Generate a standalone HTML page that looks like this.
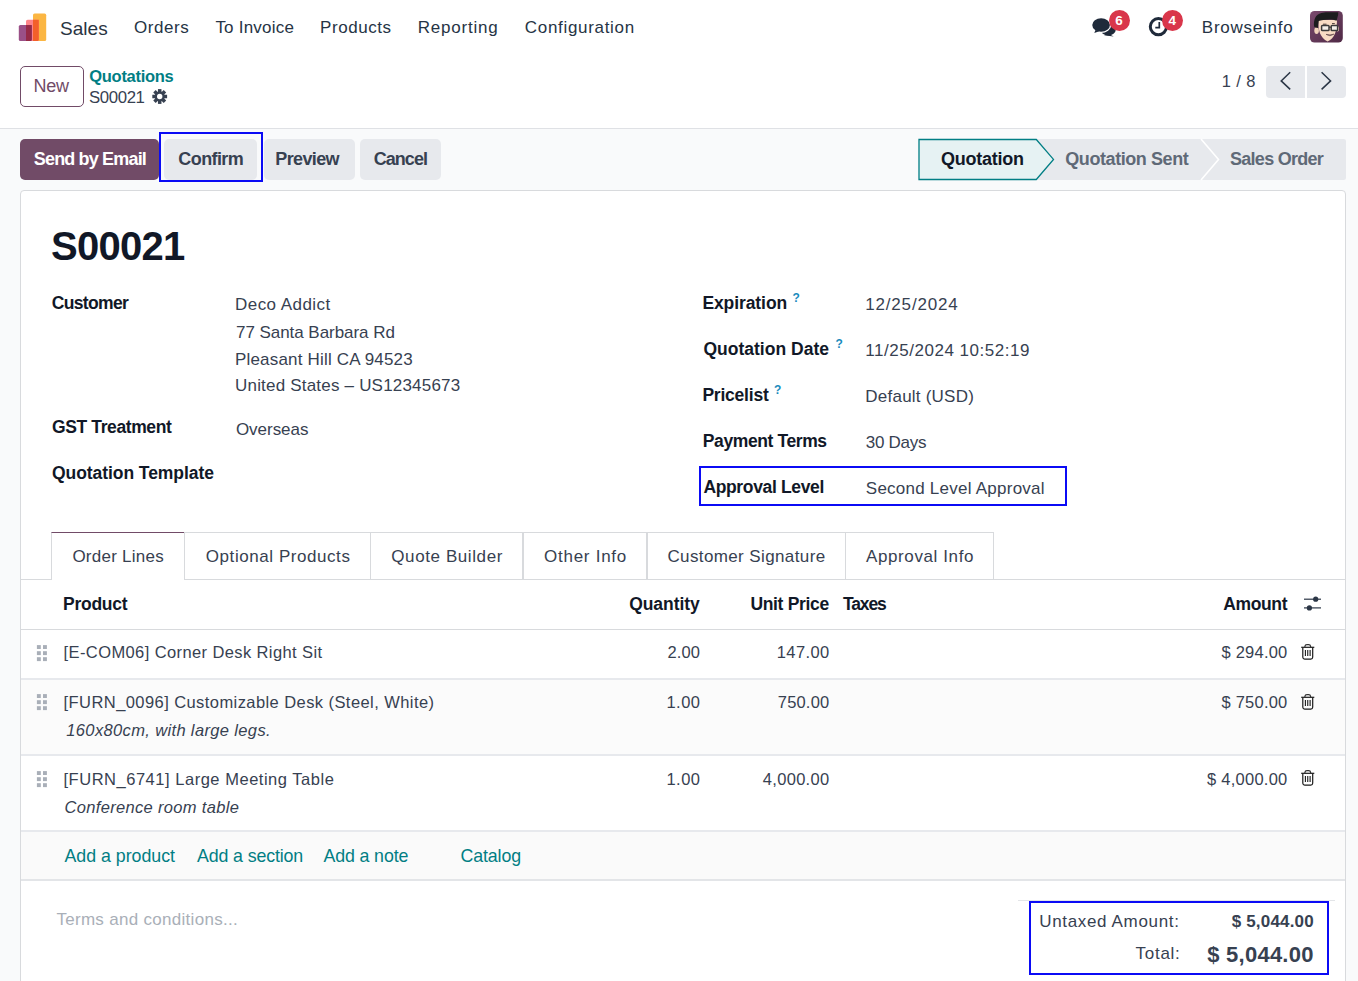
<!DOCTYPE html>
<html><head><meta charset="utf-8"><title>S00021</title>
<style>
html,body{margin:0;padding:0;}
body{width:1358px;height:981px;overflow:hidden;position:relative;background:#fff;font-family:"Liberation Sans",sans-serif;}
.t{position:absolute;white-space:nowrap;line-height:1;}
.a{position:absolute;box-sizing:border-box;}
</style></head><body>
<!-- gray content bg -->
<div class="a" style="left:0;top:128px;width:1358px;height:853px;background:#f9fafb;border-top:1px solid #dfe1e5"></div>
<!-- logo -->
<svg class="a" style="left:0;top:0" width="60" height="46" viewBox="0 0 60 46">
  <rect x="33" y="13.6" width="13.2" height="27.4" rx="1.6" fill="#fbb643"/>
  <rect x="26" y="19.7" width="12.8" height="21.3" rx="1.6" fill="#fd8489"/>
  <rect x="18.8" y="25" width="13" height="16" rx="1.6" fill="#9a5087"/>
  <path d="M26 25 H31.8 V39.4 A1.6 1.6 0 0 1 30.2 41 H26 Z" fill="#962a47"/>
  <path d="M33 19.7 H38.8 V39.4 A1.6 1.6 0 0 1 37.2 41 H33 Z" fill="#f3602a"/>
</svg>
<!-- chat icon -->
<svg class="a" style="left:1085px;top:10px" width="34" height="30" viewBox="0 0 34 30">
  <ellipse cx="23.2" cy="19.6" rx="7.6" ry="6" fill="#1f2a3a"/>
  <path d="M24 24 L28.7 26.6 L19 25.2 Z" fill="#1f2a3a"/>
  <ellipse cx="16.1" cy="15" rx="8.85" ry="6.65" fill="#fff" stroke="#fff" stroke-width="2.6"/>
  <path d="M10.2 19.5 L9.3 23.1 L14.5 21.2 Z" fill="#fff" stroke="#fff" stroke-width="2"/>
  <ellipse cx="16.1" cy="15" rx="8.85" ry="6.65" fill="#1f2a3a"/>
  <path d="M10.6 19.8 L9.3 23.1 L14.2 21.2 Z" fill="#1f2a3a"/>
</svg>
<!-- badge 6 -->
<div class="a" style="left:1109px;top:9.6px;width:21px;height:21px;border-radius:50%;background:#d9364a"></div>
<!-- clock icon -->
<svg class="a" style="left:1145px;top:12px" width="28" height="28" viewBox="0 0 28 28">
  <circle cx="13.4" cy="14.7" r="8.1" fill="none" stroke="#1f2a3a" stroke-width="3"/>
  <path d="M14.3 10 V15.6 H10.3" fill="none" stroke="#1f2a3a" stroke-width="1.7"/>
</svg>
<!-- badge 4 -->
<div class="a" style="left:1162.3px;top:9.6px;width:21px;height:21px;border-radius:50%;background:#d9364a"></div>
<!-- avatar -->
<svg class="a" style="left:1310px;top:11px" width="33" height="32" viewBox="0 0 33 32">
  <defs><linearGradient id="ag" x1="0" y1="0" x2="1" y2="1"><stop offset="0" stop-color="#7a4a6e"/><stop offset="1" stop-color="#4f2945"/></linearGradient></defs>
  <rect x="0" y="0" width="32.8" height="31.6" rx="4.5" fill="url(#ag)"/>
  <ellipse cx="6.6" cy="19.6" rx="2.3" ry="3.4" fill="#f2d3bb"/>
  <ellipse cx="27.6" cy="17.8" rx="1.4" ry="2.8" fill="#f2d3bb"/>
  <path d="M8.4 9 C8.2 20 10 26.5 17.6 30.6 C25 27 26.8 20 27 9 Z" fill="#f8dcc4"/>
  <path d="M4.1 15.5 C3.3 9 5.5 3 11.4 1.9 C17 0.8 24 1.5 28.1 1.2 C28.5 3 28 4.5 27.7 5.4 C27.3 7 27 8.5 26.6 9.7 C24 8.8 21 8.3 19.2 8.5 C15 8.8 11 9.3 8.7 10.1 C8.3 12.5 8.1 15 7.9 17.1 C6.5 16.8 5 16.5 4.1 15.5 Z" fill="#1c1c1e"/>
  <path d="M13 13.2 H16.5 M22 12.6 H24.8" stroke="#3a2a28" stroke-width="0.9"/>
  <rect x="11.6" y="14.4" width="7.4" height="5.2" rx="0.8" fill="#f4efe9" stroke="#3b3b3b" stroke-width="1.5"/>
  <rect x="21.2" y="14.4" width="6.4" height="5.2" rx="0.8" fill="#f4efe9" stroke="#3b3b3b" stroke-width="1.5"/>
  <path d="M19 16.2 H21.2" stroke="#3b3b3b" stroke-width="1.2"/>
  <path d="M16.1 23.4 Q20 26.2 23.8 23.2 Q20 24.6 16.1 23.4 Z" fill="#d9d4d4" stroke="#6b4f4f" stroke-width="0.8"/>
</svg>
<!-- New button -->
<div class="a" style="left:20px;top:66px;width:64px;height:41px;border:1px solid #714b67;border-radius:5px;background:#fff"></div>
<!-- gear -->
<svg class="a" style="left:152px;top:89px" width="16" height="16" viewBox="0 0 16 16">
  <g transform="translate(7.7 7.5)" fill="#374151">
    <circle r="5"/>
    <rect x="-1.75" y="-7.4" width="3.5" height="14.8"/>
    <rect x="-1.75" y="-7.4" width="3.5" height="14.8" transform="rotate(45)"/>
    <rect x="-1.75" y="-7.4" width="3.5" height="14.8" transform="rotate(90)"/>
    <rect x="-1.75" y="-7.4" width="3.5" height="14.8" transform="rotate(135)"/>
  </g>
  <circle cx="7.7" cy="7.5" r="2.7" fill="#fff"/>
</svg>
<!-- pager -->
<div class="a" style="left:1266px;top:66px;width:39px;height:32px;background:#e7e9ed;border-radius:4px 0 0 4px"></div>
<div class="a" style="left:1307px;top:66px;width:39px;height:32px;background:#e7e9ed;border-radius:0 4px 4px 0"></div>
<svg class="a" style="left:1266px;top:66px" width="80" height="32" viewBox="0 0 80 32">
  <path d="M24.2 6.3 L15.2 14.9 L24.2 23.4" fill="none" stroke="#2b3646" stroke-width="1.5"/>
  <path d="M55.6 6.3 L64.6 14.9 L55.6 23.4" fill="none" stroke="#2b3646" stroke-width="1.5"/>
</svg>
<!-- statusbar buttons -->
<div class="a" style="left:20px;top:139px;width:139px;height:41px;background:#714b67;border-radius:5px"></div>
<div class="a" style="left:164px;top:139px;width:93px;height:41px;background:#e7e9ed;border-radius:5px"></div>
<div class="a" style="left:264px;top:139px;width:91px;height:41px;background:#e7e9ed;border-radius:5px"></div>
<div class="a" style="left:360px;top:139px;width:81px;height:41px;background:#e7e9ed;border-radius:5px"></div>
<div class="a" style="left:159px;top:132px;width:104px;height:50px;border:2px solid #0b0bf5"></div>
<!-- status steps -->
<svg class="a" style="left:900px;top:130px" width="458" height="60" viewBox="0 0 458 60">
  <path d="M137 9 H443.5 A2.5 2.5 0 0 1 446 11.5 V47.5 A2.5 2.5 0 0 1 443.5 50 H137 Z" fill="#e7e9ed"/>
  <path d="M301 9 L318.5 29.5 L301 50" fill="none" stroke="#ffffff" stroke-width="1.6"/>
  <path d="M19 9.5 H136.3 L153.5 29.4 L136.3 49.5 H19 Z" fill="#e6f2f3" stroke="#017e84" stroke-width="1.3" stroke-linejoin="miter"/>
</svg>
<!-- sheet -->
<div class="a" style="left:20px;top:190px;width:1326px;height:820px;background:#fff;border:1px solid #d8dadd;border-radius:4px"></div>
<!-- approval blue box -->
<div class="a" style="left:699px;top:466px;width:368px;height:40px;border:2px solid #0b0bf5"></div>
<!-- tabs -->
<div class="a" style="left:21px;top:579px;width:1324px;height:1px;background:#d8dadd"></div>
<div class="a" style="left:51px;top:532px;width:134px;height:48px;background:#fff;border:1px solid #d8dadd;border-top:1px solid #714b67;border-bottom:none"></div>
<div class="a" style="left:184px;top:532px;width:810px;height:48px;border-top:1px solid #d8dadd"></div>
<div class="a" style="left:370px;top:532px;width:1px;height:47px;background:#d8dadd"></div>
<div class="a" style="left:522px;top:532px;width:2px;height:47px;background:#d8dadd"></div>
<div class="a" style="left:646px;top:532px;width:1.5px;height:47px;background:#d8dadd"></div>
<div class="a" style="left:845px;top:532px;width:1px;height:47px;background:#d8dadd"></div>
<div class="a" style="left:993px;top:532px;width:1px;height:47px;background:#d8dadd"></div>
<!-- table -->
<div class="a" style="left:21px;top:629px;width:1324px;height:1px;background:#d8dadd"></div>
<div class="a" style="left:21px;top:678px;width:1324px;height:2px;background:#e7e9ed"></div>
<div class="a" style="left:21px;top:680px;width:1324px;height:74px;background:#fbfbfb"></div>
<div class="a" style="left:21px;top:754px;width:1324px;height:2px;background:#e7e9ed"></div>
<div class="a" style="left:21px;top:830px;width:1324px;height:2px;background:#e7e9ed"></div>
<div class="a" style="left:21px;top:832px;width:1324px;height:47px;background:#fafafa"></div>
<div class="a" style="left:21px;top:879px;width:1324px;height:1.5px;background:#e3e5e8"></div>
<!-- sliders icon -->
<svg class="a" style="left:1300px;top:592px" width="24" height="22" viewBox="0 0 24 22">
  <path d="M4 7.2 H21" stroke="#2b3646" stroke-width="1.2"/>
  <path d="M4 15.9 H21" stroke="#2b3646" stroke-width="1.2"/>
  <circle cx="15.7" cy="7.2" r="2.6" fill="#2b3646"/>
  <circle cx="9.4" cy="15.9" r="2.6" fill="#2b3646"/>
</svg>
<!-- footer totals -->
<div class="a" style="left:1018px;top:900px;width:317px;height:1px;background:#e3e5e8"></div>
<div class="a" style="left:1029px;top:901px;width:300px;height:74px;border:2px solid #0b0bf5"></div>
<svg class="a" style="left:36px;top:645.0px" width="12" height="17" viewBox="0 0 12 17"><rect x="0.9" y="0.1" width="3.9" height="3.9" fill="#a9afb8"/><rect x="0.9" y="6.2" width="3.9" height="3.9" fill="#a9afb8"/><rect x="0.9" y="12.2" width="3.9" height="3.9" fill="#a9afb8"/><rect x="7.0" y="0.1" width="3.9" height="3.9" fill="#a9afb8"/><rect x="7.0" y="6.2" width="3.9" height="3.9" fill="#a9afb8"/><rect x="7.0" y="12.2" width="3.9" height="3.9" fill="#a9afb8"/></svg>
<svg class="a" style="left:1299px;top:644.2px" width="18" height="17" viewBox="0 0 18 17">
<path d="M2.2 3.3 H15.3" stroke="#1a1a1a" stroke-width="1.2"/>
<path d="M5.9 3.3 V2.4 Q6.1 0.6 8 0.6 H9.6 Q11.4 0.6 11.6 2.4 V3.3" fill="none" stroke="#333" stroke-width="1.2"/>
<path d="M3.8 3.5 V13.3 Q3.9 15.1 5.7 15.1 H11.8 Q13.6 15.1 13.7 13.3 V3.5" fill="none" stroke="#1a1a1a" stroke-width="1.2"/>
<path d="M6.4 5.9 V12 M8.75 5.9 V12 M11.1 5.9 V12" stroke="#1a1a1a" stroke-width="1.1"/>
</svg>
<svg class="a" style="left:36px;top:694.3px" width="12" height="17" viewBox="0 0 12 17"><rect x="0.9" y="0.1" width="3.9" height="3.9" fill="#a9afb8"/><rect x="0.9" y="6.2" width="3.9" height="3.9" fill="#a9afb8"/><rect x="0.9" y="12.2" width="3.9" height="3.9" fill="#a9afb8"/><rect x="7.0" y="0.1" width="3.9" height="3.9" fill="#a9afb8"/><rect x="7.0" y="6.2" width="3.9" height="3.9" fill="#a9afb8"/><rect x="7.0" y="12.2" width="3.9" height="3.9" fill="#a9afb8"/></svg>
<svg class="a" style="left:1299px;top:693.5px" width="18" height="17" viewBox="0 0 18 17">
<path d="M2.2 3.3 H15.3" stroke="#1a1a1a" stroke-width="1.2"/>
<path d="M5.9 3.3 V2.4 Q6.1 0.6 8 0.6 H9.6 Q11.4 0.6 11.6 2.4 V3.3" fill="none" stroke="#333" stroke-width="1.2"/>
<path d="M3.8 3.5 V13.3 Q3.9 15.1 5.7 15.1 H11.8 Q13.6 15.1 13.7 13.3 V3.5" fill="none" stroke="#1a1a1a" stroke-width="1.2"/>
<path d="M6.4 5.9 V12 M8.75 5.9 V12 M11.1 5.9 V12" stroke="#1a1a1a" stroke-width="1.1"/>
</svg>
<svg class="a" style="left:36px;top:771.2px" width="12" height="17" viewBox="0 0 12 17"><rect x="0.9" y="0.1" width="3.9" height="3.9" fill="#a9afb8"/><rect x="0.9" y="6.2" width="3.9" height="3.9" fill="#a9afb8"/><rect x="0.9" y="12.2" width="3.9" height="3.9" fill="#a9afb8"/><rect x="7.0" y="0.1" width="3.9" height="3.9" fill="#a9afb8"/><rect x="7.0" y="6.2" width="3.9" height="3.9" fill="#a9afb8"/><rect x="7.0" y="12.2" width="3.9" height="3.9" fill="#a9afb8"/></svg>
<svg class="a" style="left:1299px;top:770.4px" width="18" height="17" viewBox="0 0 18 17">
<path d="M2.2 3.3 H15.3" stroke="#1a1a1a" stroke-width="1.2"/>
<path d="M5.9 3.3 V2.4 Q6.1 0.6 8 0.6 H9.6 Q11.4 0.6 11.6 2.4 V3.3" fill="none" stroke="#333" stroke-width="1.2"/>
<path d="M3.8 3.5 V13.3 Q3.9 15.1 5.7 15.1 H11.8 Q13.6 15.1 13.7 13.3 V3.5" fill="none" stroke="#1a1a1a" stroke-width="1.2"/>
<path d="M6.4 5.9 V12 M8.75 5.9 V12 M11.1 5.9 V12" stroke="#1a1a1a" stroke-width="1.1"/>
</svg>

<span class="t" style="left:59.90px;top:19.00px;font-size:19px;font-weight:400;font-style:normal;color:#2a3442;letter-spacing:0.068px">Sales</span>
<span class="t" style="left:134.10px;top:19.00px;font-size:17px;font-weight:400;font-style:normal;color:#263445;letter-spacing:0.529px">Orders</span>
<span class="t" style="left:215.40px;top:19.00px;font-size:17px;font-weight:400;font-style:normal;color:#263445;letter-spacing:0.213px">To Invoice</span>
<span class="t" style="left:320.00px;top:19.00px;font-size:17px;font-weight:400;font-style:normal;color:#263445;letter-spacing:0.573px">Products</span>
<span class="t" style="left:417.80px;top:19.00px;font-size:17px;font-weight:400;font-style:normal;color:#263445;letter-spacing:0.768px">Reporting</span>
<span class="t" style="left:524.80px;top:19.00px;font-size:17px;font-weight:400;font-style:normal;color:#263445;letter-spacing:0.686px">Configuration</span>
<span class="t" style="left:1115.20px;top:14.00px;font-size:13.5px;font-weight:700;font-style:normal;color:#ffffff;letter-spacing:0.000px">6</span>
<span class="t" style="left:1168.60px;top:14.00px;font-size:13.5px;font-weight:700;font-style:normal;color:#ffffff;letter-spacing:0.000px">4</span>
<span class="t" style="left:1201.80px;top:19.00px;font-size:17px;font-weight:400;font-style:normal;color:#263445;letter-spacing:0.751px">Browseinfo</span>
<span class="t" style="left:33.60px;top:77.00px;font-size:18px;font-weight:400;font-style:normal;color:#714b67;letter-spacing:-0.305px">New</span>
<span class="t" style="left:89.30px;top:68.00px;font-size:16.5px;font-weight:700;font-style:normal;color:#017e84;letter-spacing:-0.300px">Quotations</span>
<span class="t" style="left:89.00px;top:90.00px;font-size:16.8px;font-weight:400;font-style:normal;color:#374151;letter-spacing:-0.385px">S00021</span>
<span class="t" style="left:1221.70px;top:73.00px;font-size:16.5px;font-weight:400;font-style:normal;color:#374151;letter-spacing:0.393px">1 / 8</span>
<span class="t" style="left:33.80px;top:150.00px;font-size:18px;font-weight:700;font-style:normal;color:#ffffff;letter-spacing:-0.836px">Send by Email</span>
<span class="t" style="left:178.30px;top:150.00px;font-size:18px;font-weight:700;font-style:normal;color:#374151;letter-spacing:-0.582px">Confirm</span>
<span class="t" style="left:275.30px;top:150.00px;font-size:18px;font-weight:700;font-style:normal;color:#374151;letter-spacing:-0.641px">Preview</span>
<span class="t" style="left:373.70px;top:150.00px;font-size:18px;font-weight:700;font-style:normal;color:#374151;letter-spacing:-0.945px">Cancel</span>
<span class="t" style="left:940.90px;top:150.00px;font-size:18px;font-weight:700;font-style:normal;color:#111827;letter-spacing:-0.236px">Quotation</span>
<span class="t" style="left:1065.30px;top:150.00px;font-size:18px;font-weight:700;font-style:normal;color:#5f6977;letter-spacing:-0.430px">Quotation Sent</span>
<span class="t" style="left:1230.00px;top:150.00px;font-size:18px;font-weight:700;font-style:normal;color:#5f6977;letter-spacing:-0.725px">Sales Order</span>
<span class="t" style="left:51.00px;top:226.00px;font-size:40px;font-weight:700;font-style:normal;color:#111827;letter-spacing:-0.733px">S00021</span>
<span class="t" style="left:51.80px;top:295.00px;font-size:17.5px;font-weight:700;font-style:normal;color:#111827;letter-spacing:-0.667px">Customer</span>
<span class="t" style="left:235.00px;top:296.00px;font-size:17px;font-weight:400;font-style:normal;color:#374151;letter-spacing:0.447px">Deco Addict</span>
<span class="t" style="left:236.00px;top:324.00px;font-size:17px;font-weight:400;font-style:normal;color:#374151;letter-spacing:-0.048px">77 Santa Barbara Rd</span>
<span class="t" style="left:235.00px;top:351.00px;font-size:17px;font-weight:400;font-style:normal;color:#374151;letter-spacing:0.182px">Pleasant Hill CA 94523</span>
<span class="t" style="left:235.00px;top:377.00px;font-size:17px;font-weight:400;font-style:normal;color:#374151;letter-spacing:0.198px">United States – US12345673</span>
<span class="t" style="left:52.00px;top:419.00px;font-size:17.5px;font-weight:700;font-style:normal;color:#111827;letter-spacing:-0.387px">GST Treatment</span>
<span class="t" style="left:235.90px;top:421.00px;font-size:17px;font-weight:400;font-style:normal;color:#374151;letter-spacing:-0.021px">Overseas</span>
<span class="t" style="left:52.00px;top:465.00px;font-size:17.5px;font-weight:700;font-style:normal;color:#111827;letter-spacing:-0.063px">Quotation Template</span>
<span class="t" style="left:702.40px;top:295.00px;font-size:17.5px;font-weight:700;font-style:normal;color:#111827;letter-spacing:-0.087px">Expiration</span>
<span class="t" style="left:865.30px;top:296.00px;font-size:17px;font-weight:400;font-style:normal;color:#374151;letter-spacing:0.808px">12/25/2024</span>
<span class="t" style="left:703.40px;top:341.00px;font-size:17.5px;font-weight:700;font-style:normal;color:#111827;letter-spacing:0.017px">Quotation Date</span>
<span class="t" style="left:865.30px;top:342.00px;font-size:17px;font-weight:400;font-style:normal;color:#374151;letter-spacing:0.524px">11/25/2024 10:52:19</span>
<span class="t" style="left:702.40px;top:387.00px;font-size:17.5px;font-weight:700;font-style:normal;color:#111827;letter-spacing:-0.221px">Pricelist</span>
<span class="t" style="left:865.30px;top:388.00px;font-size:17px;font-weight:400;font-style:normal;color:#374151;letter-spacing:0.230px">Default (USD)</span>
<span class="t" style="left:702.80px;top:433.00px;font-size:17.5px;font-weight:700;font-style:normal;color:#111827;letter-spacing:-0.400px">Payment Terms</span>
<span class="t" style="left:865.80px;top:434.00px;font-size:17px;font-weight:400;font-style:normal;color:#374151;letter-spacing:-0.277px">30 Days</span>
<span class="t" style="left:703.40px;top:479.00px;font-size:17.5px;font-weight:700;font-style:normal;color:#111827;letter-spacing:-0.346px">Approval Level</span>
<span class="t" style="left:865.80px;top:480.00px;font-size:17px;font-weight:400;font-style:normal;color:#374151;letter-spacing:0.242px">Second Level Approval</span>
<span class="t" style="left:792.50px;top:292.00px;font-size:12px;font-weight:700;font-style:normal;color:#1a8bbd;letter-spacing:0.000px">?</span>
<span class="t" style="left:835.50px;top:338.00px;font-size:12px;font-weight:700;font-style:normal;color:#1a8bbd;letter-spacing:0.000px">?</span>
<span class="t" style="left:774.00px;top:384.00px;font-size:12px;font-weight:700;font-style:normal;color:#1a8bbd;letter-spacing:0.000px">?</span>
<span class="t" style="left:72.40px;top:548.00px;font-size:17px;font-weight:400;font-style:normal;color:#374151;letter-spacing:0.258px">Order Lines</span>
<span class="t" style="left:205.80px;top:548.00px;font-size:17px;font-weight:400;font-style:normal;color:#374151;letter-spacing:0.561px">Optional Products</span>
<span class="t" style="left:391.30px;top:548.00px;font-size:17px;font-weight:400;font-style:normal;color:#374151;letter-spacing:0.593px">Quote Builder</span>
<span class="t" style="left:544.10px;top:548.00px;font-size:17px;font-weight:400;font-style:normal;color:#374151;letter-spacing:0.729px">Other Info</span>
<span class="t" style="left:667.40px;top:548.00px;font-size:17px;font-weight:400;font-style:normal;color:#374151;letter-spacing:0.387px">Customer Signature</span>
<span class="t" style="left:866.00px;top:548.00px;font-size:17px;font-weight:400;font-style:normal;color:#374151;letter-spacing:0.607px">Approval Info</span>
<span class="t" style="left:63.00px;top:596.00px;font-size:17.5px;font-weight:700;font-style:normal;color:#111827;letter-spacing:-0.247px">Product</span>
<span class="t" style="left:629.20px;top:596.00px;font-size:17.5px;font-weight:700;font-style:normal;color:#111827;letter-spacing:-0.063px">Quantity</span>
<span class="t" style="left:750.40px;top:596.00px;font-size:17.5px;font-weight:700;font-style:normal;color:#111827;letter-spacing:-0.329px">Unit Price</span>
<span class="t" style="left:842.90px;top:596.00px;font-size:17.5px;font-weight:700;font-style:normal;color:#111827;letter-spacing:-1.122px">Taxes</span>
<span class="t" style="left:1223.20px;top:596.00px;font-size:17.5px;font-weight:700;font-style:normal;color:#111827;letter-spacing:-0.353px">Amount</span>
<span class="t" style="left:63.60px;top:644.00px;font-size:16.5px;font-weight:400;font-style:normal;color:#374151;letter-spacing:0.394px">[E-COM06] Corner Desk Right Sit</span>
<span class="t" style="left:667.40px;top:644.00px;font-size:16.5px;font-weight:400;font-style:normal;color:#374151;letter-spacing:0.154px">2.00</span>
<span class="t" style="left:776.80px;top:644.00px;font-size:16.5px;font-weight:400;font-style:normal;color:#374151;letter-spacing:0.382px">147.00</span>
<span class="t" style="left:1221.50px;top:644.00px;font-size:16.5px;font-weight:400;font-style:normal;color:#374151;letter-spacing:0.221px">$ 294.00</span>
<span class="t" style="left:63.60px;top:694.00px;font-size:16.5px;font-weight:400;font-style:normal;color:#374151;letter-spacing:0.425px">[FURN_0096] Customizable Desk (Steel, White)</span>
<span class="t" style="left:666.40px;top:694.00px;font-size:16.5px;font-weight:400;font-style:normal;color:#374151;letter-spacing:0.488px">1.00</span>
<span class="t" style="left:777.80px;top:694.00px;font-size:16.5px;font-weight:400;font-style:normal;color:#374151;letter-spacing:0.182px">750.00</span>
<span class="t" style="left:1221.50px;top:694.00px;font-size:16.5px;font-weight:400;font-style:normal;color:#374151;letter-spacing:0.221px">$ 750.00</span>
<span class="t" style="left:66.30px;top:722.00px;font-size:16.5px;font-weight:400;font-style:italic;color:#374151;letter-spacing:0.357px">160x80cm, with large legs.</span>
<span class="t" style="left:63.50px;top:771.00px;font-size:16.5px;font-weight:400;font-style:normal;color:#374151;letter-spacing:0.523px">[FURN_6741] Large Meeting Table</span>
<span class="t" style="left:666.40px;top:771.00px;font-size:16.5px;font-weight:400;font-style:normal;color:#374151;letter-spacing:0.488px">1.00</span>
<span class="t" style="left:762.80px;top:771.00px;font-size:16.5px;font-weight:400;font-style:normal;color:#374151;letter-spacing:0.307px">4,000.00</span>
<span class="t" style="left:1207.00px;top:771.00px;font-size:16.5px;font-weight:400;font-style:normal;color:#374151;letter-spacing:0.254px">$ 4,000.00</span>
<span class="t" style="left:64.50px;top:799.00px;font-size:16.5px;font-weight:400;font-style:italic;color:#374151;letter-spacing:0.327px">Conference room table</span>
<span class="t" style="left:64.50px;top:848.00px;font-size:17.8px;font-weight:400;font-style:normal;color:#017e84;letter-spacing:-0.023px">Add a product</span>
<span class="t" style="left:197.00px;top:848.00px;font-size:17.8px;font-weight:400;font-style:normal;color:#017e84;letter-spacing:-0.130px">Add a section</span>
<span class="t" style="left:323.40px;top:848.00px;font-size:17.8px;font-weight:400;font-style:normal;color:#017e84;letter-spacing:-0.114px">Add a note</span>
<span class="t" style="left:460.60px;top:848.00px;font-size:17.8px;font-weight:400;font-style:normal;color:#017e84;letter-spacing:-0.133px">Catalog</span>
<span class="t" style="left:56.40px;top:911.00px;font-size:17px;font-weight:400;font-style:normal;color:#a9afb8;letter-spacing:0.296px">Terms and conditions...</span>
<span class="t" style="left:1039.20px;top:913.00px;font-size:17px;font-weight:400;font-style:normal;color:#374151;letter-spacing:0.662px">Untaxed Amount:</span>
<span class="t" style="left:1231.70px;top:913.00px;font-size:17px;font-weight:700;font-style:normal;color:#374151;letter-spacing:0.178px">$ 5,044.00</span>
<span class="t" style="left:1135.60px;top:945.00px;font-size:17px;font-weight:400;font-style:normal;color:#374151;letter-spacing:0.718px">Total:</span>
<span class="t" style="left:1207.30px;top:944.00px;font-size:22px;font-weight:700;font-style:normal;color:#374151;letter-spacing:0.239px">$ 5,044.00</span>
</body></html>
